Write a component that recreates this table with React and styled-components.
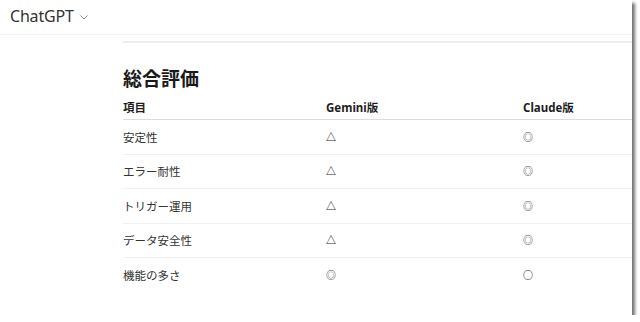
import React from 'react'
import styled, { createGlobalStyle } from 'styled-components'

const GlobalStyle = createGlobalStyle`
  html, body {
    margin: 0;
    padding: 0;
    background: #fff;
  }
  body {
    font-family: "Noto Sans", "Noto Sans CJK JP", sans-serif;
    color: #222;
  }
`

const Frame = styled.div`
  width: 632px;
  height: 315px;
  background: #fff;
  box-shadow: 3px 3px 3px rgba(0, 0, 0, 0.55);
  overflow: hidden;
  display: flex;
  flex-direction: column;
`

const Header = styled.div`
  height: 35px;
  flex: none;
  border-bottom: 1px solid #f3f3f3;
  display: flex;
  align-items: center;
  padding: 0 0 2px 10px;
  box-sizing: border-box;
  gap: 5px;
`

const ModelName = styled.span`
  font-size: 16px;
  color: #333;
  letter-spacing: -0.2px;
`

const Chevron = styled.svg`
  width: 10px;
  height: 10px;
  margin-top: 2px;
`

const Content = styled.div`
  padding: 6px 0 0 123px;
`

const Rule = styled.div`
  height: 2px;
  background: #ececec;
`

const Title = styled.h2`
  margin: 21px 0 0;
  font-size: 19px;
  line-height: 28px;
  font-weight: 700;
  color: #1a1a1a;
  font-family: "Noto Sans CJK JP", sans-serif;
`

const Row = styled.div`
  display: grid;
  grid-template-columns: 203px 197px 1fr;
  align-items: center;
  height: ${p => (p.$head ? '26px' : '34.5px')};
  border-bottom: 1px solid ${p => (p.$head ? '#dcdcdc' : p.$last ? 'transparent' : '#f0f0f0')};
  box-sizing: border-box;
  font-size: 11.5px;
  font-weight: ${p => (p.$head ? 700 : 400)};
  color: ${p => (p.$head ? '#1e1e1e' : '#333')};
`

const Cell = styled.div`
  font-family: "Noto Sans", "Noto Sans CJK JP", sans-serif;
  white-space: nowrap;
`

const Mark = styled.div`
  font-family: "Noto Sans CJK JP", sans-serif;
  font-size: 10px;
  font-weight: 700;
  line-height: 1;
  color: ${p => (p.$tone === 'light' ? '#5a5a5a' : '#2a2a2a')};
`

const Table = styled.div`
  margin-top: 2px;
`

const rows = [
  ['安定性', '△', '◎'],
  ['エラー耐性', '△', '◎'],
  ['トリガー運用', '△', '◎'],
  ['データ安全性', '△', '◎'],
  ['機能の多さ', '◎', '○'],
]

export default function App() {
  return (
    <>
      <GlobalStyle />
      <Frame>
        <Header>
          <ModelName>ChatGPT</ModelName>
          <Chevron viewBox="0 0 10 10" fill="none" stroke="#888" strokeWidth="1">
            <path d="M1.5 3.5 L5 7 L8.5 3.5" />
          </Chevron>
        </Header>
        <Content>
          <Rule />
          <Title>総合評価</Title>
          <Table>
            <Row $head>
              <Cell>項目</Cell>
              <Cell>Gemini版</Cell>
              <Cell>Claude版</Cell>
            </Row>
            {rows.map((r, i) => (
              <Row key={r[0]} $last={i === rows.length - 1}>
                <Cell>{r[0]}</Cell>
                <Mark $tone={r[1] === '◎' ? 'light' : 'dark'}>{r[1]}</Mark>
                <Mark $tone={r[2] === '◎' ? 'light' : 'dark'}>{r[2]}</Mark>
              </Row>
            ))}
          </Table>
        </Content>
      </Frame>
    </>
  )
}
